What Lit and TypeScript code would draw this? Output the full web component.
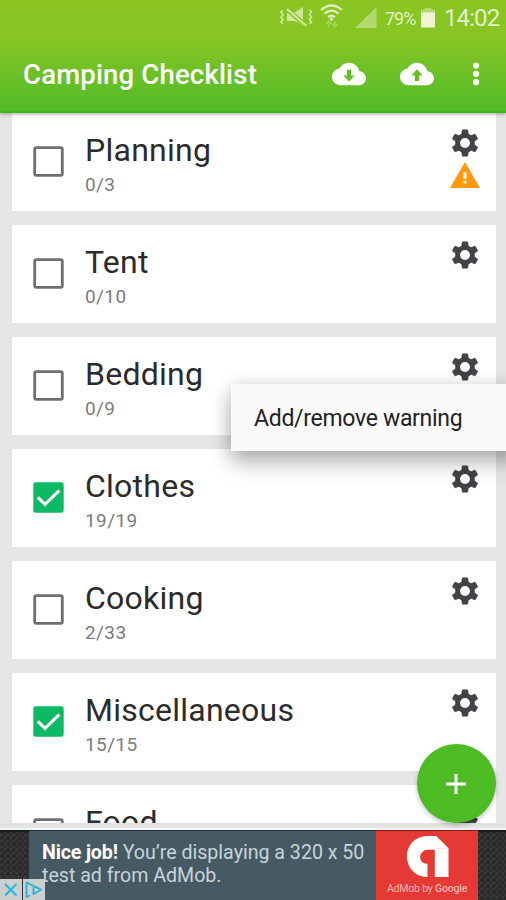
import { LitElement, html, css, svg, nothing } from "lit";
import { customElement, property } from "lit/decorators.js";

interface Category {
  name: string;
  count?: string;
  done?: boolean;
  warning?: boolean;
}

const CATEGORIES: Category[] = [
  { name: "Planning", count: "0/3", warning: true },
  { name: "Tent", count: "0/10" },
  { name: "Bedding", count: "0/9" },
  { name: "Clothes", count: "19/19", done: true },
  { name: "Cooking", count: "2/33" },
  { name: "Miscellaneous", count: "15/15", done: true },
  { name: "Food" },
];

const TEETH = [0, 60, 120, 180, 240, 300];

const CLOUD = "M19.35 10.04C18.67 6.59 15.64 4 12 4 9.11 4 6.6 5.64 5.35 8.04 2.34 8.36 0 10.91 0 14c0 3.31 2.69 6 6 6h13c2.76 0 5-2.24 5-5 0-2.64-2.05-4.78-4.65-4.96z";

@customElement("category-card")
export class CategoryCard extends LitElement {
  @property({ attribute: false }) item!: Category;

  static styles = css`
    :host {
      display: flex;
      flex: none;
      height: 98px;
      background: #fff;
      box-sizing: border-box;
      padding: 0 15px 0 21px;
    }
    .box {
      flex: none;
      width: 31px;
      height: 31px;
      margin: 33px 21px 0 0;
    }
    .text {
      flex: 1;
      white-space: nowrap;
    }
    .name {
      margin-top: 17px;
      height: 40px;
      line-height: 40px;
      font-size: 32px;
      letter-spacing: 0.25px;
      color: #2b2b2b;
    }
    .count {
      height: 24px;
      margin-top: 3px;
      line-height: 24px;
      font-size: 19px;
      letter-spacing: 0.4px;
      color: #7c7c7c;
    }
    .tools {
      flex: none;
      display: flex;
      flex-direction: column;
      align-items: center;
      width: 32px;
      padding-top: 14px;
    }
    .gear {
      width: 32px;
      height: 32px;
    }
    .warn {
      width: 30px;
      height: 26px;
      margin-top: 3px;
    }
  `;

  render() {
    const i = this.item;
    return html`
      <svg class="box" viewBox="0 0 31 31">
        ${i.done
          ? svg`<rect x=".3" y=".3" width="30.4" height="30.4" rx="2.5" fill="#0cba64"/><path d="M4.8 15.3 12 22.3 26.4 8.4" fill="none" stroke="#fff" stroke-width="3.2"/>`
          : svg`<rect x="1.7" y="1.7" width="27.6" height="27.6" rx="1.5" fill="none" stroke="#707070" stroke-width="2.8"/>`}
      </svg>
      <div class="text">
        <div class="name">${i.name}</div>
        ${i.count ? html`<div class="count">${i.count}</div>` : nothing}
      </div>
      <div class="tools">
        <svg class="gear" viewBox="-16 -16 32 32">
          <circle r="7.4" fill="none" stroke="#424346" stroke-width="4.9" />
          ${TEETH.map(
            (a) => svg`<path d="M-3.5 -8 -2.7 -13.2H2.7L3.5 -8Z" transform="rotate(${a})" fill="#424346" stroke="#424346" stroke-width=".5" stroke-linejoin="round"/>`
          )}
        </svg>
        ${i.warning
          ? html`<svg class="warn" viewBox="0 0 30 26">
              <path d="M15 0 30 26H0Z" fill="#ff9a0f" />
              <path d="M13.4 10.3h3.200v6.500h-3.200zM13.400 18.500h3.200v3h-3.200z" fill="#fff3dc" />
            </svg>`
          : nothing}
      </div>
    `;
  }
}

@customElement("ad-banner")
export class AdBanner extends LitElement {
  static styles = css`
    :host {
      position: relative;
      display: flex;
      flex: none;
      height: 70px;
      background-color: #373737;
      background-image: radial-gradient(circle at 2px 2px, #292929 1.5px, transparent 2px),
        radial-gradient(circle at 5px 5px, #2b2b2b 1.5px, transparent 2px);
      background-size: 6px 6px;
      box-shadow: inset 0 2px #161c1e;
    }
    .copy {
      width: 347px;
      box-sizing: border-box;
      margin-left: 29px;
      padding: 10px 0 0 13px;
      background: #465a63;
      border-top: 1px solid #17353b;
      color: #c6d4dc;
      font-size: 19.6px;
      line-height: 23px;
      white-space: nowrap;
    }
    .lead {
      color: #fff;
      font-weight: 700;
      letter-spacing: -0.15px;
    }
    .brand {
      width: 102px;
      background: #e53935;
      display: flex;
      flex-direction: column;
      align-items: center;
      border-top: 1px solid #8e1815;
      box-sizing: border-box;
      padding-top: 4px;
    }
    .logo {
      width: 43px;
      height: 43px;
    }
    .by {
      margin-top: 4px;
      font-size: 10.5px;
      line-height: 14px;
      letter-spacing: -0.2px;
      color: #f9b3ae;
      white-space: nowrap;
    }
    .google {
      font-weight: 500;
    }
    .choices {
      position: absolute;
      left: 0;
      bottom: 0;
      width: 45px;
      height: 21px;
    }
  `;

  render() {
    return html`
      <div class="copy"><span class="lead">Nice job!</span> You’re displaying a 320 x 50<br />test ad from AdMob.</div>
      <div class="brand">
        <svg class="logo" viewBox="0 0 44 43">
          <path
            d="M22 0.5H31L43.5 13V42.5H29.5V14.500H22.500C18 14.500 14.500 17.800 14.500 22C14.500 26 17.500 29 22 29V42.500C9.500 42.500 1 33 1 21.500C1 9.500 10 0.500 22 0.500Z"
            fill="#fff"
          />
          <path d="M31 13.200h12.500" stroke="#e2e2e2" stroke-width=".8" />
        </svg>
        <div class="by">AdMob by <span class="google">Google</span></div>
      </div>
      <svg class="choices" viewBox="0 0 45 21">
        <path d="M0 0h22v21H0zM23 0h22v21H23z" fill="#cbcfd0" />
        <path d="M5 5 16.500 16.500M16.500 5 5 16.500" stroke="#26b4d6" stroke-width="2" />
        <path d="M30 16.500 26.500 18V3.500L41 10.700 33.500 15V8.300" fill="none" stroke="#26b4d6" stroke-width="1.900" stroke-linejoin="round" />
      </svg>
    `;
  }
}

@customElement("app-root")
export class AppRoot extends LitElement {
  static styles = css`
    :host {
      position: relative;
      display: flex;
      flex-direction: column;
      width: 506px;
      height: 900px;
      overflow: hidden;
      background: #e6e6e6;
      font-family: Roboto, "Liberation Sans", sans-serif;
    }
    .header {
      position: relative;
      z-index: 1;
      flex: none;
      height: 113px;
      background: linear-gradient(#8ac522 0, #88c522 36px, #51bc28 110px, #3eb215 113px);
      box-shadow: 0 1px 4px rgba(0, 0, 0, 0.35);
    }
    .status {
      display: flex;
      align-items: center;
      height: 37px;
      color: #e3f0c8;
    }
    .signals {
      flex: none;
      width: 106px;
      height: 37px;
      margin-left: 276px;
    }
    .percent {
      flex: none;
      width: 36px;
      margin-left: 3px;
      font-size: 18px;
      letter-spacing: -1px;
      white-space: nowrap;
      line-height: 37px;
      height: 37px;
    }
    .battery {
      width: 14px;
      height: 21px;
      margin-top: -2px;
      flex: none;
    }
    .clock {
      margin-left: 9px;
      font-size: 24px;
      letter-spacing: -0.9px;
      white-space: nowrap;
      height: 37px;
      line-height: 36px;
    }
    .toolbar {
      display: flex;
      align-items: center;
      height: 76px;
      padding-left: 23px;
    }
    .title {
      width: 309px;
      margin-top: -2px;
      font-size: 27.5px;
      font-weight: 500;
      color: #fff;
      white-space: nowrap;
      letter-spacing: 0.18px;
    }
    .cloud {
      width: 34px;
      height: 34px;
      margin: -2px 34px 0 0;
      flex: none;
    }
    .dots {
      width: 8px;
      height: 26px;
      flex: none;
      margin: -3px 0 0 4px;
    }
    .list {
      display: flex;
      flex-direction: column;
      gap: 14px;
      height: 710px;
      padding: 0 10px 0 12px;
      overflow: hidden;
      flex: none;
    }
    .gap {
      flex: none;
      height: 7px;
      background: linear-gradient(#e2e2e2 4px, #f5f5f5 6px);
    }
    .menu {
      position: absolute;
      left: 231px;
      top: 384px;
      width: 290px;
      height: 67px;
      box-sizing: border-box;
      padding-left: 23px;
      line-height: 69px;
      background: #fafafa;
      font-size: 23px;
      color: #222;
      letter-spacing: -0.3px;
      white-space: nowrap;
      box-shadow: 0 12px 20px rgba(0, 0, 0, 0.28), 0 0 16px rgba(0, 0, 0, 0.12);
    }
    .fab {
      position: absolute;
      left: 417px;
      top: 744px;
      width: 79px;
      height: 79px;
      border-radius: 50%;
      background: #4dbb24;
      box-shadow: 0 2px 5px rgba(0, 0, 0, 0.25);
    }
    .plus {
      display: block;
      width: 79px;
      height: 79px;
    }
  `;

  render() {
    return html`
      <div class="header">
        <div class="status">
          <svg class="signals" viewBox="276 0 106 37">
            <path d="M287 12.500h7.500L303 7V25L294.500 21H287Z" fill="#cfe6a0" />
            <path d="M286.500 9 307 26.500" stroke="#88c522" stroke-width="4.500" />
            <g fill="none" stroke="#cfe6a0" stroke-width="1.700">
              <path d="M283 10l-2 2 2 2.500-2 2.500 2 2.500-2 2.500 2 2M309.500 10l2 2-2 2.500 2 2.500-2 2.500 2 2.500-2 2" />
              <path d="M287 9 306.500 26" stroke-width="2.300" />
            </g>
            <g fill="none" stroke="#deeebf" stroke-width="2.300">
              <path d="M321 10Q331.500 1 342 10M324.500 13.700Q331.500 7.500 338.500 13.700M328 17.200Q331.500 14 335 17.200" />
            </g>
            <circle cx="331.500" cy="19" r="1.700" fill="#deeebf" />
            <path d="M326.500 24l2.500-3 2.500 3M332.500 24l2.500 3 2.500-3M329 21v6M335 21v6" fill="none" stroke="#a8d45c" stroke-width="1.500" />
            <path d="M355 28 376.500 7V28Z" fill="#b1d970" />
          </svg>
          <div class="percent">79%</div>
          <svg class="battery" viewBox="0 0 15 22" preserveAspectRatio="none">
            <path d="M4 1h7v2h4v2.500H0V3h4z" fill="#b5d977" />
            <path d="M0 5.500h15V21.500H0z" fill="#edf5d5" />
          </svg>
          <div class="clock">14:02</div>
        </div>
        <div class="toolbar">
          <div class="title">Camping Checklist</div>
          <svg class="cloud" viewBox="0 0 24 24">
            <path d=${CLOUD} fill="#fff" />
            <path d="M10.500 9h3v4H16l-4 4.300L8 13h2.500z" fill="#65bf25" />
          </svg>
          <svg class="cloud" viewBox="0 0 24 24">
            <path d=${CLOUD} fill="#fff" />
            <path d="M10.500 17h3v-4H16l-4-4.300L8 13h2.500z" fill="#65bf25" />
          </svg>
          <svg class="dots" viewBox="0 0 8 26" fill="#fff">
            <circle cx="4" cy="4.500" r="3.100" />
            <circle cx="4" cy="12.800" r="3.100" />
            <circle cx="4" cy="21.200" r="3.100" />
          </svg>
        </div>
      </div>
      <div class="list">${CATEGORIES.map((c) => html`<category-card .item=${c}></category-card>`)}</div>
      <div class="gap"></div>
      <ad-banner></ad-banner>
      <div class="menu">Add/remove warning</div>
      <div class="fab">
        <svg class="plus" viewBox="0 0 79 79">
          <path d="M39 30v20M29 40h20" stroke="#fff" stroke-width="3" />
        </svg>
      </div>
    `;
  }
}
